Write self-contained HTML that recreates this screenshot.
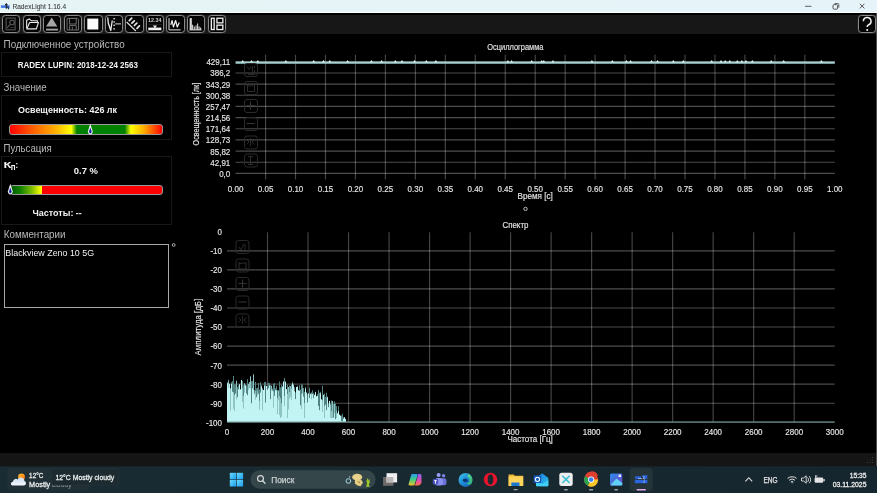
<!DOCTYPE html><html><head><meta charset="utf-8"><style>
*{margin:0;padding:0;box-sizing:border-box}
html,body{width:877px;height:493px;overflow:hidden;background:#000;font-family:"Liberation Sans",sans-serif;position:relative}
.a{position:absolute;white-space:nowrap;line-height:1}
.btn{position:absolute;top:14.5px;width:18.4px;height:18.2px;border:1px solid #8a8a8a;border-radius:3.5px;background:#060606;box-shadow:inset 0 0 0 1px #000, 0 0 0 0.5px #2a2a2a;overflow:hidden}
.box{position:absolute;border:1px solid #181818}
svg{position:absolute;left:0;top:0}
</style></head><body>
<div class="a" style="left:0;top:0;width:877px;height:13px;background:linear-gradient(90deg,#e6f4f5,#e6f3f9)"></div>
<div class="a" style="left:0;top:11.6px;width:877px;height:1.2px;background:#fbffff"></div>
<svg width="12" height="13" style="left:0;top:0;will-change:transform"><rect x="0.9" y="5.3" width="8.7" height="2.6" fill="#3f78e0"/><path d="M6.3 3.2v5.6M5 4.6h2.6M7.5 6.4l1.4 2.8" stroke="#222230" stroke-width="1.1"/></svg>
<svg width="877" height="13" style="left:0;top:0"><path d="M805 6.3h6.5" stroke="#666" stroke-width="1"/><rect x="833" y="4.6" width="4.6" height="4.6" rx="1.2" fill="none" stroke="#555" stroke-width="1"/><path d="M834.6 3.5h3.2a1 1 0 0 1 1 1v3.2" fill="none" stroke="#555" stroke-width="0.9"/><path d="M859.8 3.8l4.6 4.6M864.4 3.8l-4.6 4.6" stroke="#555" stroke-width="1"/></svg>
<div class="a" style="left:0;top:12.8px;width:877px;height:1.8px;background:#000"></div>
<div class="a" style="left:0;top:14.6px;width:877px;height:19.6px;background:#171717"></div>
<div class="btn" style="left:2.00px"></div><svg width="19" height="19" viewBox="0 0 19 19" style="left:2.00px;top:14.5px;will-change:transform"><rect x="4.15" y="3.15" width="9" height="11.6" fill="none" stroke="#404040" stroke-width="1.5"/><circle cx="10" cy="7.5" r="2.3" fill="none" stroke="#585858" stroke-width="1.1"/><path d="M8.2 9.4l-3.2 3.4" stroke="#585858" stroke-width="1.1"/><path d="M7.7 12.4h5.6" stroke="#383838" stroke-width="0.8"/></svg>
<div class="btn" style="left:22.55px"></div><svg width="19" height="19" viewBox="0 0 19 19" style="left:22.55px;top:14.5px;will-change:transform"><path d="M3.65 12.9V5.2l2.5-1.3l2.1 1.8h6.1v1.8" fill="none" stroke="#ececec" stroke-width="1.1" stroke-linejoin="round"/><path d="M3.75 13.9l2.9-6.4h8.8l-2.1 6.4z" fill="none" stroke="#ececec" stroke-width="1.1" stroke-linejoin="round"/></svg>
<div class="btn" style="left:43.10px"></div><svg width="19" height="19" viewBox="0 0 19 19" style="left:43.10px;top:14.5px;will-change:transform"><path d="M8.7 2.6l5.6 9h-11.2z" fill="#a6a6a6"/><rect x="3.1" y="13.7" width="12" height="1.8" fill="#a6a6a6"/></svg>
<div class="btn" style="left:63.65px"></div><svg width="19" height="19" viewBox="0 0 19 19" style="left:63.65px;top:14.5px;will-change:transform"><path d="M3.05 3.4h10.5l1 1v10.6h-11.5z" fill="none" stroke="#6c6c6c" stroke-width="1"/><rect x="5.55" y="3.4" width="6.7" height="5.6" fill="none" stroke="#6c6c6c" stroke-width="1"/><path d="M5.55 15v-4.4h6.7v4.4M8.3 11.8v3" fill="none" stroke="#6c6c6c" stroke-width="1"/></svg>
<div class="btn" style="left:84.20px"></div><svg width="19" height="19" viewBox="0 0 19 19" style="left:84.20px;top:14.5px;will-change:transform"><rect x="3.3" y="3.6" width="11" height="10.9" fill="#fafafa"/></svg>
<div class="btn" style="left:104.75px"></div><svg width="19" height="19" viewBox="0 0 19 19" style="left:104.75px;top:14.5px;will-change:transform"><path d="M2.75 2.5l0.5 5.5l2.5 7.5l1.5-10" fill="none" stroke="#ececec" stroke-width="1.3" stroke-linejoin="round"/><rect x="8.4" y="3" width="1.5" height="1.4" fill="#ddd"/><rect x="8.4" y="6.3" width="1.5" height="1.4" fill="#ddd"/><rect x="8.4" y="9.6" width="1.5" height="1.4" fill="#ddd"/><rect x="8.4" y="13.2" width="1.5" height="1.4" fill="#ddd"/><path d="M10.2 8.9h5.8" stroke="#ddd" stroke-width="1"/></svg>
<div class="btn" style="left:125.30px"></div><svg width="19" height="19" viewBox="0 0 19 19" style="left:125.30px;top:14.5px;will-change:transform"><path d="M1.6 7l9.3 9" stroke="#e4e4e4" stroke-width="1.1"/><path d="M4.3 5.6l2.4-2.4M6.9 8.2l2.4-2.4M9.4 10.5l2.4-2.4M12 13.3l2.4-2.4" stroke="#e8e8e8" stroke-width="1.7" stroke-linecap="round"/></svg>
<div class="btn" style="left:145.85px"></div><svg width="19" height="19" viewBox="0 0 19 19" style="left:145.85px;top:14.5px;will-change:transform"><text x="2.1" y="7.4" font-size="5.2" font-family="Liberation Sans" font-weight="bold" fill="#cfcfcf" textLength="13.3" lengthAdjust="spacingAndGlyphs">12.34</text><path d="M2.5 9.5h13" stroke="#2e2e2e" stroke-width="0.6"/><rect x="2.25" y="12.6" width="13.1" height="2.6" fill="#f2f2f2"/><path d="M6.9 10.6h4.1l-2.05 3.1z" fill="#e6e6e6"/></svg>
<div class="btn" style="left:166.40px"></div><svg width="19" height="19" viewBox="0 0 19 19" style="left:166.40px;top:14.5px;will-change:transform"><path d="M3 3.1v11.8h11.6" fill="none" stroke="#e4e4e4" stroke-width="1"/><path d="M4.8 9.8l1.3-4.3 1.3 6.5 2.2-6.5 1.7 6.5 2-4.5" fill="none" stroke="#f2f2f2" stroke-width="1.2" stroke-linejoin="round"/></svg>
<div class="btn" style="left:186.95px"></div><svg width="19" height="19" viewBox="0 0 19 19" style="left:186.95px;top:14.5px;will-change:transform"><path d="M2.6 14.9h11.9" stroke="#e8e8e8" stroke-width="1"/><rect x="2.65" y="3.1" width="2.2" height="11.8" fill="#d8d8d8"/><path d="M5.6 14.9V9.8M7.3 14.9V11.5M9.05 14.9V10.5M10.6 14.9V8.5M12.1 14.9V11.5M13.6 14.9V12.5" stroke="#cfcfcf" stroke-width="1.1"/></svg>
<div class="btn" style="left:207.50px"></div><svg width="19" height="19" viewBox="0 0 19 19" style="left:207.50px;top:14.5px;will-change:transform"><rect x="3.35" y="3.25" width="2.8" height="11.3" fill="none" stroke="#f2f2f2" stroke-width="1.3"/><rect x="8.95" y="3.25" width="5.9" height="4.6" fill="none" stroke="#f2f2f2" stroke-width="1.3"/><rect x="8.95" y="10.15" width="5.9" height="4.4" fill="none" stroke="#f2f2f2" stroke-width="1.3"/></svg>
<div class="btn" style="left:857.9px;width:18.2px"></div><svg width="19" height="19" viewBox="0 0 19 19" style="left:857.9px;top:14.5px"><path d="M5.4 6.3a3.8 3.8 0 1 1 5.4 3.4c-1.1 0.6-1.6 1.1-1.6 2.1v0.3" fill="none" stroke="#f6f6f6" stroke-width="1.5" stroke-linecap="butt"/><circle cx="9.2" cy="15" r="1" fill="#f6f6f6"/></svg>
<div class="a" style="left:876px;top:13px;width:1px;height:453px;background:#505050"></div>
<div class="box" style="left:1px;top:52px;width:171px;height:25px"></div>
<div class="box" style="left:1px;top:95px;width:171px;height:45px"></div>
<div class="a" style="left:9.3px;top:124.4px;width:153.4px;height:10.3px;border-radius:3px;border:1px solid #9a9a9a;background:linear-gradient(90deg,#ff0000 0%,#ff5a00 14%,#ffb000 30%,#ffff00 40.5%,#008000 44%,#008000 75.5%,#ffff00 79.5%,#ffb000 88%,#ff3000 97%,#ff0000 100%)"></div>
<svg width="9" height="13" style="left:85.6px;top:123.2px"><path d="M4.3 0.8L6.7 8.2Q6.6 11.3 4.3 11.4Q2 11.3 1.9 8.2z" fill="#f4f4f4"/><path d="M4.3 4.6L5.6 8.6Q5.5 10.4 4.3 10.4Q3.1 10.4 3 8.6z" fill="#1020a0"/></svg>
<div class="box" style="left:1px;top:156px;width:171px;height:69px"></div>
<div class="a" style="left:9.8px;top:185px;width:153px;height:10.2px;border-radius:3px;border:1px solid #9a9a9a;background:linear-gradient(90deg,#005a00 0%,#108000 6%,#80c000 14%,#ffff00 19.8%,#ffff00 20.4%,#ff0000 20.7%,#ff0000 100%)"></div>
<svg width="9" height="13" style="left:6.2px;top:183.4px"><path d="M4.3 0.8L6.7 8.2Q6.6 11.3 4.3 11.4Q2 11.3 1.9 8.2z" fill="#f4f4f4"/><path d="M4.3 4.6L5.6 8.6Q5.5 10.4 4.3 10.4Q3.1 10.4 3 8.6z" fill="#1020a0"/></svg>
<div class="a" style="left:3.5px;top:244px;width:165.5px;height:64px;border:1px solid #a8a8a8"></div>
<svg width="6" height="6" style="left:171px;top:243px"><circle cx="2.7" cy="2" r="1.4" fill="none" stroke="#ccc" stroke-width="0.8"/></svg>
<svg width="877" height="493" style="left:0;top:0"><path d="M235.6 61.80H834.8" stroke="#fff" stroke-opacity="0.30" stroke-width="1.15"/><path d="M235.6 72.96H834.8" stroke="#fff" stroke-opacity="0.30" stroke-width="1.15"/><path d="M235.6 84.12H834.8" stroke="#fff" stroke-opacity="0.30" stroke-width="1.15"/><path d="M235.6 95.28H834.8" stroke="#fff" stroke-opacity="0.30" stroke-width="1.15"/><path d="M235.6 106.44H834.8" stroke="#fff" stroke-opacity="0.30" stroke-width="1.15"/><path d="M235.6 117.60H834.8" stroke="#fff" stroke-opacity="0.30" stroke-width="1.15"/><path d="M235.6 128.76H834.8" stroke="#fff" stroke-opacity="0.30" stroke-width="1.15"/><path d="M235.6 139.92H834.8" stroke="#fff" stroke-opacity="0.30" stroke-width="1.15"/><path d="M235.6 151.08H834.8" stroke="#fff" stroke-opacity="0.30" stroke-width="1.15"/><path d="M235.6 162.24H834.8" stroke="#fff" stroke-opacity="0.30" stroke-width="1.15"/><path d="M235.6 173.40H834.8" stroke="#fff" stroke-opacity="0.30" stroke-width="1.15"/><path d="M265.56 54.8V179.5" stroke="#fff" stroke-opacity="0.27" stroke-width="1.15"/><path d="M295.52 54.8V179.5" stroke="#fff" stroke-opacity="0.27" stroke-width="1.15"/><path d="M325.48 54.8V179.5" stroke="#fff" stroke-opacity="0.27" stroke-width="1.15"/><path d="M355.44 54.8V179.5" stroke="#fff" stroke-opacity="0.27" stroke-width="1.15"/><path d="M385.40 54.8V179.5" stroke="#fff" stroke-opacity="0.27" stroke-width="1.15"/><path d="M415.36 54.8V179.5" stroke="#fff" stroke-opacity="0.27" stroke-width="1.15"/><path d="M445.32 54.8V179.5" stroke="#fff" stroke-opacity="0.27" stroke-width="1.15"/><path d="M475.28 54.8V179.5" stroke="#fff" stroke-opacity="0.27" stroke-width="1.15"/><path d="M505.24 54.8V179.5" stroke="#fff" stroke-opacity="0.27" stroke-width="1.15"/><path d="M535.20 54.8V179.5" stroke="#fff" stroke-opacity="0.27" stroke-width="1.15"/><path d="M565.16 54.8V179.5" stroke="#fff" stroke-opacity="0.27" stroke-width="1.15"/><path d="M595.12 54.8V179.5" stroke="#fff" stroke-opacity="0.27" stroke-width="1.15"/><path d="M625.08 54.8V179.5" stroke="#fff" stroke-opacity="0.27" stroke-width="1.15"/><path d="M655.04 54.8V179.5" stroke="#fff" stroke-opacity="0.27" stroke-width="1.15"/><path d="M685.00 54.8V179.5" stroke="#fff" stroke-opacity="0.27" stroke-width="1.15"/><path d="M714.96 54.8V179.5" stroke="#fff" stroke-opacity="0.27" stroke-width="1.15"/><path d="M744.92 54.8V179.5" stroke="#fff" stroke-opacity="0.27" stroke-width="1.15"/><path d="M774.88 54.8V179.5" stroke="#fff" stroke-opacity="0.27" stroke-width="1.15"/><path d="M804.84 54.8V179.5" stroke="#fff" stroke-opacity="0.27" stroke-width="1.15"/></svg>
<svg width="877" height="493" style="left:0;top:0"><circle cx="525.5" cy="208.9" r="1.7" fill="none" stroke="#d0d0d0" stroke-width="0.9"/><path d="M235.6 62.6H834.8" stroke="#a4d0d0" stroke-width="2.4"/><path d="M241.29999999999998 62.2L242.7 59.9L244.1 62.2z" fill="#e4f6f6"/><path d="M250.1 62.2L251.5 59.9L252.9 62.2z" fill="#e4f6f6"/><path d="M256.40000000000003 62.2L257.8 59.9L259.2 62.2z" fill="#e4f6f6"/><path d="M284.5 62.2L285.9 59.9L287.29999999999995 62.2z" fill="#e4f6f6"/><path d="M312.3 62.2L313.7 59.9L315.09999999999997 62.2z" fill="#e4f6f6"/><path d="M322.1 62.2L323.5 59.9L324.9 62.2z" fill="#e4f6f6"/><path d="M328.40000000000003 62.2L329.8 59.9L331.2 62.2z" fill="#e4f6f6"/><path d="M346.20000000000005 62.2L347.6 59.9L349.0 62.2z" fill="#e4f6f6"/><path d="M370.0 62.2L371.4 59.9L372.79999999999995 62.2z" fill="#e4f6f6"/><path d="M380.1 62.2L381.5 59.9L382.9 62.2z" fill="#e4f6f6"/><path d="M393.90000000000003 62.2L395.3 59.9L396.7 62.2z" fill="#e4f6f6"/><path d="M400.6 62.2L402 59.9L403.4 62.2z" fill="#e4f6f6"/><path d="M413.1 62.2L414.5 59.9L415.9 62.2z" fill="#e4f6f6"/><path d="M424.90000000000003 62.2L426.3 59.9L427.7 62.2z" fill="#e4f6f6"/><path d="M434.5 62.2L435.9 59.9L437.29999999999995 62.2z" fill="#e4f6f6"/><path d="M506.5 62.2L507.9 59.9L509.29999999999995 62.2z" fill="#e4f6f6"/><path d="M510.20000000000005 62.2L511.6 59.9L513.0 62.2z" fill="#e4f6f6"/><path d="M530.3000000000001 62.2L531.7 59.9L533.1 62.2z" fill="#e4f6f6"/><path d="M540.3000000000001 62.2L541.7 59.9L543.1 62.2z" fill="#e4f6f6"/><path d="M542.4 62.2L543.8 59.9L545.1999999999999 62.2z" fill="#e4f6f6"/><path d="M551.6 62.2L553 59.9L554.4 62.2z" fill="#e4f6f6"/><path d="M590.5 62.2L591.9 59.9L593.3 62.2z" fill="#e4f6f6"/><path d="M610.9 62.2L612.3 59.9L613.6999999999999 62.2z" fill="#e4f6f6"/><path d="M625.1 62.2L626.5 59.9L627.9 62.2z" fill="#e4f6f6"/><path d="M629.2 62.2L630.6 59.9L632.0 62.2z" fill="#e4f6f6"/><path d="M650.1 62.2L651.5 59.9L652.9 62.2z" fill="#e4f6f6"/><path d="M656.1 62.2L657.5 59.9L658.9 62.2z" fill="#e4f6f6"/><path d="M671.9 62.2L673.3 59.9L674.6999999999999 62.2z" fill="#e4f6f6"/><path d="M681.9 62.2L683.3 59.9L684.6999999999999 62.2z" fill="#e4f6f6"/><path d="M710.3000000000001 62.2L711.7 59.9L713.1 62.2z" fill="#e4f6f6"/><path d="M719.6 62.2L721 59.9L722.4 62.2z" fill="#e4f6f6"/><path d="M723.8000000000001 62.2L725.2 59.9L726.6 62.2z" fill="#e4f6f6"/><path d="M728.4 62.2L729.8 59.9L731.1999999999999 62.2z" fill="#e4f6f6"/><path d="M735.9 62.2L737.3 59.9L738.6999999999999 62.2z" fill="#e4f6f6"/><path d="M740.4 62.2L741.8 59.9L743.1999999999999 62.2z" fill="#e4f6f6"/><path d="M744.6 62.2L746 59.9L747.4 62.2z" fill="#e4f6f6"/><path d="M750.9 62.2L752.3 59.9L753.6999999999999 62.2z" fill="#e4f6f6"/><path d="M769.8000000000001 62.2L771.2 59.9L772.6 62.2z" fill="#e4f6f6"/><path d="M782.3000000000001 62.2L783.7 59.9L785.1 62.2z" fill="#e4f6f6"/><path d="M819.9 62.2L821.3 59.9L822.6999999999999 62.2z" fill="#e4f6f6"/><rect x="244.5" y="63.5" width="13" height="13" rx="2.5" fill="none" stroke="#2a2a2a" stroke-width="1"/><rect x="244.5" y="81.5" width="13" height="13" rx="2.5" fill="none" stroke="#2a2a2a" stroke-width="1"/><rect x="244.5" y="99.5" width="13" height="13" rx="2.5" fill="none" stroke="#2a2a2a" stroke-width="1"/><rect x="244.5" y="117.5" width="13" height="13" rx="2.5" fill="none" stroke="#2a2a2a" stroke-width="1"/><rect x="244.5" y="136.0" width="13" height="13" rx="2.5" fill="none" stroke="#2a2a2a" stroke-width="1"/><rect x="244.5" y="154.0" width="13" height="13" rx="2.5" fill="none" stroke="#2a2a2a" stroke-width="1"/><path d="M247 66.5l2 3 2-3M252.5 66v8M248 74.5h7M254.5 66v2M254.5 70v2" stroke="#333333" fill="none" stroke-width="0.8"/><path d="M247.5 84.5v7h7v-7M247.5 85l2 1.5 2-1.5 2 1.5" stroke="#333333" fill="none" stroke-width="0.9"/><path d="M246.5 105.5h8M250.5 101.5v8" stroke="#333333" stroke-width="1.1"/><path d="M246.5 123.5h8" stroke="#333333" stroke-width="1.1"/><path d="M250.5 138v8M246.5 139.5l2.5 2.5-2.5 2.5M254.5 139.5l-2.5 2.5 2.5 2.5" stroke="#333333" fill="none" stroke-width="0.8"/><path d="M248 156.5h5M248 164.5h5M250.5 156.5v8" stroke="#333333" stroke-width="0.9"/><path d="M227.0 250.80H834.7" stroke="#fff" stroke-opacity="0.30" stroke-width="1.15"/><path d="M227.0 269.85H834.7" stroke="#fff" stroke-opacity="0.30" stroke-width="1.15"/><path d="M227.0 288.90H834.7" stroke="#fff" stroke-opacity="0.30" stroke-width="1.15"/><path d="M227.0 307.95H834.7" stroke="#fff" stroke-opacity="0.30" stroke-width="1.15"/><path d="M227.0 327.00H834.7" stroke="#fff" stroke-opacity="0.30" stroke-width="1.15"/><path d="M227.0 346.05H834.7" stroke="#fff" stroke-opacity="0.30" stroke-width="1.15"/><path d="M227.0 365.10H834.7" stroke="#fff" stroke-opacity="0.30" stroke-width="1.15"/><path d="M227.0 384.15H834.7" stroke="#fff" stroke-opacity="0.30" stroke-width="1.15"/><path d="M227.0 403.20H834.7" stroke="#fff" stroke-opacity="0.30" stroke-width="1.15"/><path d="M227.0 422.25H834.7" stroke="#fff" stroke-opacity="0.30" stroke-width="1.15"/><path d="M267.51 232.3V422" stroke="#fff" stroke-opacity="0.27" stroke-width="1.15"/><path d="M308.03 232.3V422" stroke="#fff" stroke-opacity="0.27" stroke-width="1.15"/><path d="M348.54 232.3V422" stroke="#fff" stroke-opacity="0.27" stroke-width="1.15"/><path d="M389.05 232.3V422" stroke="#fff" stroke-opacity="0.27" stroke-width="1.15"/><path d="M429.57 232.3V422" stroke="#fff" stroke-opacity="0.27" stroke-width="1.15"/><path d="M470.08 232.3V422" stroke="#fff" stroke-opacity="0.27" stroke-width="1.15"/><path d="M510.59 232.3V422" stroke="#fff" stroke-opacity="0.27" stroke-width="1.15"/><path d="M551.11 232.3V422" stroke="#fff" stroke-opacity="0.27" stroke-width="1.15"/><path d="M591.62 232.3V422" stroke="#fff" stroke-opacity="0.27" stroke-width="1.15"/><path d="M632.13 232.3V422" stroke="#fff" stroke-opacity="0.27" stroke-width="1.15"/><path d="M672.65 232.3V422" stroke="#fff" stroke-opacity="0.27" stroke-width="1.15"/><path d="M713.16 232.3V422" stroke="#fff" stroke-opacity="0.27" stroke-width="1.15"/><path d="M753.67 232.3V422" stroke="#fff" stroke-opacity="0.27" stroke-width="1.15"/><path d="M794.19 232.3V422" stroke="#fff" stroke-opacity="0.27" stroke-width="1.15"/><rect x="227" y="382.2" width="1" height="39.8" fill="#528282"/><rect x="227" y="383.3" width="1" height="38.7" fill="#c2f4f4"/><rect x="228" y="379.6" width="1" height="42.4" fill="#528282"/><rect x="228" y="381.8" width="1" height="40.2" fill="#c2f4f4"/><rect x="228" y="381.8" width="1" height="5.9" fill="#8fc4c4"/><rect x="229" y="383.3" width="1" height="38.7" fill="#528282"/><rect x="229" y="384.1" width="1" height="37.9" fill="#c2f4f4"/><rect x="230" y="388.6" width="1" height="33.4" fill="#528282"/><rect x="230" y="388.6" width="1" height="33.4" fill="#c2f4f4"/><rect x="230" y="388.6" width="1" height="22.0" fill="#8fc4c4"/><rect x="231" y="382.1" width="1" height="39.9" fill="#528282"/><rect x="231" y="384.0" width="1" height="38.0" fill="#c2f4f4"/><rect x="232" y="381.0" width="1" height="41.0" fill="#528282"/><rect x="232" y="391.8" width="1" height="30.2" fill="#c2f4f4"/><rect x="233" y="375.9" width="1" height="46.1" fill="#528282"/><rect x="233" y="392.6" width="1" height="29.4" fill="#c2f4f4"/><rect x="233" y="392.6" width="1" height="16.3" fill="#8fc4c4"/><rect x="234" y="383.8" width="1" height="38.2" fill="#528282"/><rect x="234" y="395.0" width="1" height="27.0" fill="#c2f4f4"/><rect x="234" y="395.0" width="1" height="16.1" fill="#8fc4c4"/><rect x="235" y="384.6" width="1" height="37.4" fill="#528282"/><rect x="235" y="393.6" width="1" height="28.4" fill="#c2f4f4"/><rect x="236" y="380.6" width="1" height="41.4" fill="#528282"/><rect x="236" y="381.5" width="1" height="40.5" fill="#c2f4f4"/><rect x="236" y="381.5" width="1" height="18.0" fill="#8fc4c4"/><rect x="237" y="387.1" width="1" height="34.9" fill="#528282"/><rect x="237" y="397.2" width="1" height="24.8" fill="#c2f4f4"/><rect x="238" y="385.4" width="1" height="36.6" fill="#528282"/><rect x="238" y="389.3" width="1" height="32.7" fill="#c2f4f4"/><rect x="239" y="384.3" width="1" height="37.7" fill="#528282"/><rect x="239" y="384.3" width="1" height="37.7" fill="#c2f4f4"/><rect x="240" y="389.5" width="1" height="32.5" fill="#528282"/><rect x="240" y="389.5" width="1" height="32.5" fill="#c2f4f4"/><rect x="241" y="379.8" width="1" height="42.2" fill="#528282"/><rect x="241" y="380.0" width="1" height="42.0" fill="#c2f4f4"/><rect x="242" y="380.9" width="1" height="41.1" fill="#528282"/><rect x="242" y="388.6" width="1" height="33.4" fill="#c2f4f4"/><rect x="242" y="388.6" width="1" height="13.4" fill="#8fc4c4"/><rect x="243" y="385.2" width="1" height="36.8" fill="#528282"/><rect x="243" y="395.9" width="1" height="26.1" fill="#c2f4f4"/><rect x="243" y="395.9" width="1" height="12.7" fill="#8fc4c4"/><rect x="244" y="383.3" width="1" height="38.7" fill="#528282"/><rect x="244" y="383.7" width="1" height="38.3" fill="#c2f4f4"/><rect x="244" y="383.7" width="1" height="8.9" fill="#8fc4c4"/><rect x="245" y="384.6" width="1" height="37.4" fill="#528282"/><rect x="245" y="385.5" width="1" height="36.5" fill="#c2f4f4"/><rect x="246" y="385.5" width="1" height="36.5" fill="#528282"/><rect x="246" y="393.4" width="1" height="28.6" fill="#c2f4f4"/><rect x="247" y="379.1" width="1" height="42.9" fill="#528282"/><rect x="247" y="395.2" width="1" height="26.8" fill="#c2f4f4"/><rect x="248" y="383.8" width="1" height="38.2" fill="#528282"/><rect x="248" y="384.5" width="1" height="37.5" fill="#c2f4f4"/><rect x="248" y="384.5" width="1" height="5.4" fill="#8fc4c4"/><rect x="249" y="382.0" width="1" height="40.0" fill="#528282"/><rect x="249" y="382.0" width="1" height="40.0" fill="#c2f4f4"/><rect x="249" y="382.0" width="1" height="6.1" fill="#8fc4c4"/><rect x="250" y="376.3" width="1" height="45.7" fill="#528282"/><rect x="250" y="376.8" width="1" height="45.2" fill="#c2f4f4"/><rect x="250" y="376.8" width="1" height="11.6" fill="#8fc4c4"/><rect x="251" y="381.3" width="1" height="40.7" fill="#528282"/><rect x="251" y="403.3" width="1" height="18.7" fill="#c2f4f4"/><rect x="252" y="380.9" width="1" height="41.1" fill="#528282"/><rect x="252" y="388.3" width="1" height="33.7" fill="#c2f4f4"/><rect x="253" y="373.9" width="1" height="48.1" fill="#528282"/><rect x="253" y="375.0" width="1" height="47.0" fill="#c2f4f4"/><rect x="253" y="375.0" width="1" height="15.1" fill="#8fc4c4"/><rect x="254" y="389.9" width="1" height="32.1" fill="#528282"/><rect x="254" y="393.7" width="1" height="28.3" fill="#c2f4f4"/><rect x="255" y="381.8" width="1" height="40.2" fill="#528282"/><rect x="255" y="391.0" width="1" height="31.0" fill="#c2f4f4"/><rect x="255" y="391.0" width="1" height="8.7" fill="#8fc4c4"/><rect x="256" y="388.3" width="1" height="33.7" fill="#528282"/><rect x="256" y="397.2" width="1" height="24.8" fill="#c2f4f4"/><rect x="257" y="387.6" width="1" height="34.4" fill="#528282"/><rect x="257" y="390.9" width="1" height="31.1" fill="#c2f4f4"/><rect x="257" y="390.9" width="1" height="4.6" fill="#8fc4c4"/><rect x="258" y="383.0" width="1" height="39.0" fill="#528282"/><rect x="258" y="393.8" width="1" height="28.2" fill="#c2f4f4"/><rect x="259" y="389.6" width="1" height="32.4" fill="#528282"/><rect x="259" y="400.9" width="1" height="21.1" fill="#c2f4f4"/><rect x="259" y="400.9" width="1" height="8.8" fill="#8fc4c4"/><rect x="260" y="382.2" width="1" height="39.8" fill="#528282"/><rect x="260" y="392.6" width="1" height="29.4" fill="#c2f4f4"/><rect x="261" y="385.1" width="1" height="36.9" fill="#528282"/><rect x="261" y="386.4" width="1" height="35.6" fill="#c2f4f4"/><rect x="262" y="388.1" width="1" height="33.9" fill="#528282"/><rect x="262" y="389.7" width="1" height="32.3" fill="#c2f4f4"/><rect x="262" y="389.7" width="1" height="20.8" fill="#8fc4c4"/><rect x="263" y="390.0" width="1" height="32.0" fill="#528282"/><rect x="263" y="390.0" width="1" height="32.0" fill="#c2f4f4"/><rect x="264" y="382.1" width="1" height="39.9" fill="#528282"/><rect x="264" y="385.8" width="1" height="36.2" fill="#c2f4f4"/><rect x="265" y="381.8" width="1" height="40.2" fill="#528282"/><rect x="265" y="402.5" width="1" height="19.5" fill="#c2f4f4"/><rect x="266" y="385.9" width="1" height="36.1" fill="#528282"/><rect x="266" y="385.9" width="1" height="36.1" fill="#c2f4f4"/><rect x="267" y="385.7" width="1" height="36.3" fill="#528282"/><rect x="267" y="389.9" width="1" height="32.1" fill="#c2f4f4"/><rect x="268" y="382.6" width="1" height="39.4" fill="#528282"/><rect x="268" y="388.1" width="1" height="33.9" fill="#c2f4f4"/><rect x="269" y="383.1" width="1" height="38.9" fill="#528282"/><rect x="269" y="385.6" width="1" height="36.4" fill="#c2f4f4"/><rect x="270" y="385.1" width="1" height="36.9" fill="#528282"/><rect x="270" y="399.1" width="1" height="22.9" fill="#c2f4f4"/><rect x="271" y="385.5" width="1" height="36.5" fill="#528282"/><rect x="271" y="386.4" width="1" height="35.6" fill="#c2f4f4"/><rect x="271" y="386.4" width="1" height="4.1" fill="#8fc4c4"/><rect x="272" y="388.5" width="1" height="33.5" fill="#528282"/><rect x="272" y="390.6" width="1" height="31.4" fill="#c2f4f4"/><rect x="273" y="383.8" width="1" height="38.2" fill="#528282"/><rect x="273" y="391.8" width="1" height="30.2" fill="#c2f4f4"/><rect x="273" y="391.8" width="1" height="15.8" fill="#8fc4c4"/><rect x="274" y="383.1" width="1" height="38.9" fill="#528282"/><rect x="274" y="395.8" width="1" height="26.2" fill="#c2f4f4"/><rect x="275" y="388.2" width="1" height="33.8" fill="#528282"/><rect x="275" y="390.2" width="1" height="31.8" fill="#c2f4f4"/><rect x="276" y="385.8" width="1" height="36.2" fill="#528282"/><rect x="276" y="390.4" width="1" height="31.6" fill="#c2f4f4"/><rect x="277" y="390.1" width="1" height="31.9" fill="#528282"/><rect x="277" y="398.4" width="1" height="23.6" fill="#c2f4f4"/><rect x="277" y="398.4" width="1" height="15.7" fill="#8fc4c4"/><rect x="278" y="390.1" width="1" height="31.9" fill="#528282"/><rect x="278" y="391.0" width="1" height="31.0" fill="#c2f4f4"/><rect x="278" y="391.0" width="1" height="9.1" fill="#8fc4c4"/><rect x="279" y="381.5" width="1" height="40.5" fill="#528282"/><rect x="279" y="396.1" width="1" height="25.9" fill="#c2f4f4"/><rect x="279" y="396.1" width="1" height="19.0" fill="#8fc4c4"/><rect x="280" y="387.4" width="1" height="34.6" fill="#528282"/><rect x="280" y="398.7" width="1" height="23.3" fill="#c2f4f4"/><rect x="280" y="398.7" width="1" height="19.3" fill="#8fc4c4"/><rect x="281" y="384.8" width="1" height="37.2" fill="#528282"/><rect x="281" y="403.7" width="1" height="18.3" fill="#c2f4f4"/><rect x="281" y="403.7" width="1" height="13.1" fill="#8fc4c4"/><rect x="282" y="386.0" width="1" height="36.0" fill="#528282"/><rect x="282" y="387.1" width="1" height="34.9" fill="#c2f4f4"/><rect x="283" y="381.0" width="1" height="41.0" fill="#528282"/><rect x="283" y="381.7" width="1" height="40.3" fill="#c2f4f4"/><rect x="284" y="378.0" width="1" height="44.0" fill="#528282"/><rect x="284" y="396.4" width="1" height="25.6" fill="#c2f4f4"/><rect x="284" y="396.4" width="1" height="9.6" fill="#8fc4c4"/><rect x="285" y="381.3" width="1" height="40.7" fill="#528282"/><rect x="285" y="382.1" width="1" height="39.9" fill="#c2f4f4"/><rect x="286" y="389.1" width="1" height="32.9" fill="#528282"/><rect x="286" y="389.1" width="1" height="32.9" fill="#c2f4f4"/><rect x="287" y="384.6" width="1" height="37.4" fill="#528282"/><rect x="287" y="394.4" width="1" height="27.6" fill="#c2f4f4"/><rect x="287" y="394.4" width="1" height="23.6" fill="#8fc4c4"/><rect x="288" y="387.3" width="1" height="34.7" fill="#528282"/><rect x="288" y="387.3" width="1" height="34.7" fill="#c2f4f4"/><rect x="288" y="387.3" width="1" height="22.1" fill="#8fc4c4"/><rect x="289" y="385.5" width="1" height="36.5" fill="#528282"/><rect x="289" y="392.2" width="1" height="29.8" fill="#c2f4f4"/><rect x="289" y="392.2" width="1" height="6.7" fill="#8fc4c4"/><rect x="290" y="386.3" width="1" height="35.7" fill="#528282"/><rect x="290" y="386.4" width="1" height="35.6" fill="#c2f4f4"/><rect x="290" y="386.4" width="1" height="10.6" fill="#8fc4c4"/><rect x="291" y="384.4" width="1" height="37.6" fill="#528282"/><rect x="291" y="388.9" width="1" height="33.1" fill="#c2f4f4"/><rect x="291" y="388.9" width="1" height="11.3" fill="#8fc4c4"/><rect x="292" y="381.8" width="1" height="40.2" fill="#528282"/><rect x="292" y="383.4" width="1" height="38.6" fill="#c2f4f4"/><rect x="293" y="383.8" width="1" height="38.2" fill="#528282"/><rect x="293" y="385.4" width="1" height="36.6" fill="#c2f4f4"/><rect x="294" y="387.2" width="1" height="34.8" fill="#528282"/><rect x="294" y="391.1" width="1" height="30.9" fill="#c2f4f4"/><rect x="295" y="392.3" width="1" height="29.7" fill="#528282"/><rect x="295" y="399.1" width="1" height="22.9" fill="#c2f4f4"/><rect x="296" y="386.8" width="1" height="35.2" fill="#528282"/><rect x="296" y="387.0" width="1" height="35.0" fill="#c2f4f4"/><rect x="297" y="385.7" width="1" height="36.3" fill="#528282"/><rect x="297" y="387.2" width="1" height="34.8" fill="#c2f4f4"/><rect x="298" y="390.1" width="1" height="31.9" fill="#528282"/><rect x="298" y="390.4" width="1" height="31.6" fill="#c2f4f4"/><rect x="299" y="385.3" width="1" height="36.7" fill="#528282"/><rect x="299" y="391.0" width="1" height="31.0" fill="#c2f4f4"/><rect x="300" y="389.5" width="1" height="32.5" fill="#528282"/><rect x="300" y="405.2" width="1" height="16.8" fill="#c2f4f4"/><rect x="301" y="384.3" width="1" height="37.7" fill="#528282"/><rect x="301" y="394.4" width="1" height="27.6" fill="#c2f4f4"/><rect x="301" y="394.4" width="1" height="14.6" fill="#8fc4c4"/><rect x="302" y="384.6" width="1" height="37.4" fill="#528282"/><rect x="302" y="388.8" width="1" height="33.2" fill="#c2f4f4"/><rect x="302" y="388.8" width="1" height="4.5" fill="#8fc4c4"/><rect x="303" y="387.9" width="1" height="34.1" fill="#528282"/><rect x="303" y="396.6" width="1" height="25.4" fill="#c2f4f4"/><rect x="304" y="391.8" width="1" height="30.2" fill="#528282"/><rect x="304" y="403.0" width="1" height="19.0" fill="#c2f4f4"/><rect x="304" y="403.0" width="1" height="15.0" fill="#8fc4c4"/><rect x="305" y="387.0" width="1" height="35.0" fill="#528282"/><rect x="305" y="388.7" width="1" height="33.3" fill="#c2f4f4"/><rect x="306" y="392.1" width="1" height="29.9" fill="#528282"/><rect x="306" y="393.1" width="1" height="28.9" fill="#c2f4f4"/><rect x="307" y="394.4" width="1" height="27.6" fill="#528282"/><rect x="307" y="402.5" width="1" height="19.5" fill="#c2f4f4"/><rect x="308" y="393.2" width="1" height="28.8" fill="#528282"/><rect x="308" y="393.5" width="1" height="28.5" fill="#c2f4f4"/><rect x="309" y="387.7" width="1" height="34.3" fill="#528282"/><rect x="309" y="398.0" width="1" height="24.0" fill="#c2f4f4"/><rect x="310" y="393.8" width="1" height="28.2" fill="#528282"/><rect x="310" y="393.8" width="1" height="28.2" fill="#c2f4f4"/><rect x="311" y="392.4" width="1" height="29.6" fill="#528282"/><rect x="311" y="393.8" width="1" height="28.2" fill="#c2f4f4"/><rect x="311" y="393.8" width="1" height="5.6" fill="#8fc4c4"/><rect x="312" y="390.3" width="1" height="31.7" fill="#528282"/><rect x="312" y="394.1" width="1" height="27.9" fill="#c2f4f4"/><rect x="313" y="392.9" width="1" height="29.1" fill="#528282"/><rect x="313" y="398.1" width="1" height="23.9" fill="#c2f4f4"/><rect x="314" y="394.5" width="1" height="27.5" fill="#528282"/><rect x="314" y="395.0" width="1" height="27.0" fill="#c2f4f4"/><rect x="315" y="391.7" width="1" height="30.3" fill="#528282"/><rect x="315" y="392.2" width="1" height="29.8" fill="#c2f4f4"/><rect x="316" y="395.9" width="1" height="26.1" fill="#528282"/><rect x="316" y="396.6" width="1" height="25.4" fill="#c2f4f4"/><rect x="317" y="394.0" width="1" height="28.0" fill="#528282"/><rect x="317" y="396.0" width="1" height="26.0" fill="#c2f4f4"/><rect x="318" y="389.8" width="1" height="32.2" fill="#528282"/><rect x="318" y="405.9" width="1" height="16.1" fill="#c2f4f4"/><rect x="319" y="392.7" width="1" height="29.3" fill="#528282"/><rect x="319" y="410.2" width="1" height="11.8" fill="#c2f4f4"/><rect x="320" y="391.8" width="1" height="30.2" fill="#528282"/><rect x="320" y="393.4" width="1" height="28.6" fill="#c2f4f4"/><rect x="321" y="399.5" width="1" height="22.5" fill="#528282"/><rect x="321" y="399.5" width="1" height="22.5" fill="#c2f4f4"/><rect x="322" y="385.8" width="1" height="36.2" fill="#528282"/><rect x="322" y="400.7" width="1" height="21.3" fill="#c2f4f4"/><rect x="322" y="400.7" width="1" height="11.2" fill="#8fc4c4"/><rect x="323" y="394.8" width="1" height="27.2" fill="#528282"/><rect x="323" y="394.8" width="1" height="27.2" fill="#c2f4f4"/><rect x="324" y="393.5" width="1" height="28.5" fill="#528282"/><rect x="324" y="406.2" width="1" height="15.8" fill="#c2f4f4"/><rect x="324" y="406.2" width="1" height="11.8" fill="#8fc4c4"/><rect x="325" y="396.8" width="1" height="25.2" fill="#528282"/><rect x="325" y="404.7" width="1" height="17.3" fill="#c2f4f4"/><rect x="326" y="392.7" width="1" height="29.3" fill="#528282"/><rect x="326" y="410.1" width="1" height="11.9" fill="#c2f4f4"/><rect x="327" y="396.6" width="1" height="25.4" fill="#528282"/><rect x="327" y="397.4" width="1" height="24.6" fill="#c2f4f4"/><rect x="328" y="403.6" width="1" height="18.4" fill="#528282"/><rect x="328" y="407.2" width="1" height="14.8" fill="#c2f4f4"/><rect x="329" y="400.9" width="1" height="21.1" fill="#528282"/><rect x="329" y="400.9" width="1" height="21.1" fill="#c2f4f4"/><rect x="330" y="403.5" width="1" height="18.5" fill="#528282"/><rect x="330" y="405.4" width="1" height="16.6" fill="#c2f4f4"/><rect x="330" y="405.4" width="1" height="12.6" fill="#8fc4c4"/><rect x="331" y="400.4" width="1" height="21.6" fill="#528282"/><rect x="331" y="411.5" width="1" height="10.5" fill="#c2f4f4"/><rect x="331" y="411.5" width="1" height="6.5" fill="#8fc4c4"/><rect x="332" y="401.0" width="1" height="21.0" fill="#528282"/><rect x="332" y="401.3" width="1" height="20.7" fill="#c2f4f4"/><rect x="332" y="401.3" width="1" height="16.7" fill="#8fc4c4"/><rect x="333" y="404.0" width="1" height="18.0" fill="#528282"/><rect x="333" y="417.7" width="1" height="4.3" fill="#c2f4f4"/><rect x="334" y="401.4" width="1" height="20.6" fill="#528282"/><rect x="334" y="404.3" width="1" height="17.7" fill="#c2f4f4"/><rect x="334" y="404.3" width="1" height="9.0" fill="#8fc4c4"/><rect x="335" y="403.6" width="1" height="18.4" fill="#528282"/><rect x="335" y="419.1" width="1" height="2.9" fill="#c2f4f4"/><rect x="336" y="406.1" width="1" height="15.9" fill="#528282"/><rect x="336" y="410.7" width="1" height="11.3" fill="#c2f4f4"/><rect x="336" y="410.7" width="1" height="7.3" fill="#8fc4c4"/><rect x="337" y="412.7" width="1" height="9.3" fill="#528282"/><rect x="337" y="413.5" width="1" height="8.5" fill="#c2f4f4"/><rect x="338" y="406.2" width="1" height="15.8" fill="#528282"/><rect x="338" y="411.0" width="1" height="11.0" fill="#c2f4f4"/><rect x="339" y="414.7" width="1" height="7.3" fill="#528282"/><rect x="339" y="414.7" width="1" height="7.3" fill="#c2f4f4"/><rect x="340" y="415.2" width="1" height="6.8" fill="#528282"/><rect x="340" y="416.0" width="1" height="6.0" fill="#c2f4f4"/><rect x="341" y="415.6" width="1" height="6.4" fill="#528282"/><rect x="341" y="421.0" width="1" height="1.0" fill="#c2f4f4"/><rect x="341" y="421.0" width="1" height="-3.0" fill="#8fc4c4"/><rect x="342" y="413.7" width="1" height="8.3" fill="#528282"/><rect x="342" y="421.0" width="1" height="1.0" fill="#c2f4f4"/><rect x="343" y="417.3" width="1" height="4.7" fill="#528282"/><rect x="343" y="418.8" width="1" height="3.2" fill="#c2f4f4"/><rect x="343" y="418.8" width="1" height="-0.8" fill="#8fc4c4"/><rect x="344" y="417.2" width="1" height="4.8" fill="#528282"/><rect x="344" y="417.2" width="1" height="4.8" fill="#c2f4f4"/><rect x="345" y="418.9" width="1" height="3.1" fill="#528282"/><rect x="345" y="418.9" width="1" height="3.1" fill="#c2f4f4"/><rect x="227.0" y="421.5" width="607.7" height="1" fill="#6e9e9e"/><rect x="236.0" y="240.5" width="13" height="13" rx="2.5" fill="none" stroke="#2a2a2a" stroke-width="1"/><rect x="236.0" y="259.0" width="13" height="13" rx="2.5" fill="none" stroke="#2a2a2a" stroke-width="1"/><rect x="236.0" y="277.5" width="13" height="13" rx="2.5" fill="none" stroke="#2a2a2a" stroke-width="1"/><rect x="236.0" y="296.0" width="13" height="13" rx="2.5" fill="none" stroke="#2a2a2a" stroke-width="1"/><rect x="236.0" y="314.0" width="13" height="13" rx="2.5" fill="none" stroke="#2a2a2a" stroke-width="1"/><path d="M239 247l2 3 3-6M245 244v7M240 251.5h7" stroke="#333333" fill="none" stroke-width="0.8"/><path d="M239 262v7h7v-7M239 262.5l2 1.5 2-1.5 2 1.5" stroke="#333333" fill="none" stroke-width="0.9"/><path d="M238.5 283.5h8M242.5 279.5v8" stroke="#333333" stroke-width="1.1"/><path d="M238.5 302h8" stroke="#333333" stroke-width="1.1"/><path d="M242.5 316v8M238.5 317.5l2.5 2.5-2.5 2.5M246.5 317.5l-2.5 2.5 2.5 2.5" stroke="#333333" fill="none" stroke-width="0.8"/></svg>
<div class="a" style="left:0;top:453.3px;width:876px;height:12.7px;background:#151515"></div>
<svg width="877" height="493" style="left:0;top:0"><g fill="#3a3a3a"><rect x="872" y="457" width="1" height="1"/><rect x="869.5" y="459.5" width="1" height="1"/><rect x="872" y="459.5" width="1" height="1"/><rect x="867" y="462" width="1" height="1"/><rect x="869.5" y="462" width="1" height="1"/><rect x="872" y="462" width="1" height="1"/></g></svg>
<svg width="877" height="493" style="left:0;top:0;will-change:transform"><defs><linearGradient id="win" x1="0" y1="0" x2="1" y2="1"><stop offset="0" stop-color="#6ad8fa"/><stop offset="1" stop-color="#1a9ef0"/></linearGradient><linearGradient id="sun" x1="0" y1="0" x2="1" y2="1"><stop offset="0" stop-color="#ffc030"/><stop offset="1" stop-color="#ff6a00"/></linearGradient><linearGradient id="cloud" x1="0" y1="0" x2="0" y2="1"><stop offset="0" stop-color="#c8dcf0"/><stop offset="1" stop-color="#f4f8ff"/></linearGradient><linearGradient id="cop" x1="0" y1="0" x2="1" y2="1"><stop offset="0" stop-color="#30b0ff"/><stop offset="0.35" stop-color="#70e060"/><stop offset="0.6" stop-color="#ffb030"/><stop offset="1" stop-color="#e040c0"/></linearGradient><linearGradient id="edge" x1="0" y1="0" x2="1" y2="1"><stop offset="0" stop-color="#40c8f0"/><stop offset="0.6" stop-color="#1a80d0"/><stop offset="1" stop-color="#1060b0"/></linearGradient><linearGradient id="edge2" x1="0" y1="0" x2="1" y2="1"><stop offset="0" stop-color="#60e0a0"/><stop offset="1" stop-color="#30b070"/></linearGradient><linearGradient id="photo" x1="0" y1="0" x2="1" y2="1"><stop offset="0" stop-color="#2a90f0"/><stop offset="1" stop-color="#7040c0"/></linearGradient><linearGradient id="outl" x1="0" y1="0" x2="1" y2="1"><stop offset="0" stop-color="#1a70d8"/><stop offset="1" stop-color="#30c8f0"/></linearGradient><linearGradient id="tbg" x1="0" y1="0" x2="1" y2="0"><stop offset="0" stop-color="#1a2c33"/><stop offset="1" stop-color="#16262e"/></linearGradient></defs><rect x="0" y="466" width="877" height="27" fill="url(#tbg)"/><rect x="0" y="466" width="877" height="1" fill="#14201f" opacity="0.6"/><rect x="7.3" y="468.1" width="82.4" height="22.5" rx="3.5" fill="#203036"/><circle cx="21.5" cy="477" r="3.4" fill="url(#sun)"/><path d="M12.6 485.5h11.2a2.3 2.3 0 0 0 0.6-4.5a3.6 3.6 0 0 0-6.8-1.6a2.9 2.9 0 0 0-4.6 2.3a1.9 1.9 0 0 0-0.4 3.8z" fill="url(#cloud)"/><text x="51.8" y="486.7" font-size="7.8" font-family="Liberation Sans" fill="#9aa4a6" textLength="20" lengthAdjust="spacingAndGlyphs">cloudy</text><rect x="50.9" y="468.6" width="68" height="16.5" rx="3" fill="#1d2b30" stroke="#28383d" stroke-width="0.6"/><rect x="229.8" y="472.8" width="6.4" height="6.6" fill="url(#win)"/><rect x="236.8" y="472.8" width="6.3" height="6.6" fill="url(#win)"/><rect x="229.8" y="480" width="6.4" height="6.5" fill="url(#win)"/><rect x="236.8" y="480" width="6.3" height="6.5" fill="url(#win)"/><rect x="250.4" y="470.2" width="125.2" height="18.5" rx="9.25" fill="#35464b"/><circle cx="260.5" cy="478.6" r="2.9" fill="none" stroke="#d6dada" stroke-width="1.2"/><path d="M262.6 480.8l2.4 2.5" stroke="#d6dada" stroke-width="1.3" stroke-linecap="round"/><circle cx="348.4" cy="481" r="2.3" fill="none" stroke="#a8d8e0" stroke-width="1"/><circle cx="349.6" cy="476.9" r="0.8" fill="#90b0c0"/><ellipse cx="357.2" cy="477.2" rx="5" ry="3.4" fill="#e6d08a"/><path d="M355 480l6-0.6l2 3.2l-2.4 3.6l-3.2-0.8l-2.6-2z" fill="#e2cc80"/><path d="M358 481.5l2 1.2" stroke="#7a6a30" stroke-width="0.8"/><path d="M366 486.8l1-3-0.6-3 1.6-3 0.4 2.8 1-1.6 0.4 3.2-1 2.6 1.2 2z" fill="#9cc828"/><rect x="383.1" y="477" width="10.3" height="8.8" fill="#6e6a6a"/><rect x="386.5" y="473.2" width="10.6" height="9.2" fill="#f0f0f0"/><rect x="386.5" y="477" width="6.9" height="5.4" fill="#b8b6b6"/><defs><linearGradient id="cop1" x1="0" y1="0" x2="0" y2="1"><stop offset="0" stop-color="#2a9af0"/><stop offset="0.5" stop-color="#40d080"/><stop offset="1" stop-color="#f0c030"/></linearGradient><linearGradient id="cop2" x1="0" y1="0" x2="0" y2="1"><stop offset="0" stop-color="#8a60f0"/><stop offset="0.6" stop-color="#e050b0"/><stop offset="1" stop-color="#ff7040"/></linearGradient></defs><path d="M412.2 474h4.2c0.9 0 1.4 0.6 1.1 1.5l-2.9 9c-0.3 0.6-0.8 0.9-1.5 0.9h-3.4c-0.9 0-1.3-0.6-1.1-1.4l2.4-8.3c0.3-1.1 0.6-1.7 1.2-1.7z" fill="url(#cop1)"/><path d="M417.4 474h2.4c1.1 0 1.7 0.7 1.7 1.7v6.4c0 1.9-1.3 3.3-3.2 3.3h-4.4c0.7 0 1.2-0.4 1.5-1.1l2.6-8.7c0.2-0.8-0.1-1.6-0.6-1.6z" fill="url(#cop2)"/><circle cx="438.6" cy="474.9" r="2" fill="#9a9ef5"/><circle cx="443.6" cy="475.8" r="1.7" fill="#7b83eb"/><rect x="441" y="478.3" width="5.5" height="7" rx="2.2" fill="#6a72d8"/><rect x="435" y="478" width="8" height="7.6" rx="2.5" fill="#8a90f0"/><rect x="432.8" y="479" width="5.4" height="5.4" rx="0.8" fill="#4b53bc"/><path d="M434.2 480.6h2.6M435.5 480.6v3" stroke="#fff" stroke-width="0.9"/><circle cx="465.5" cy="479.9" r="7" fill="url(#edge)"/><path d="M468.5 473.6a7 7 0 0 1 2.5 10.6c-1.4 0.4-3.2 0.3-4.4-0.5c1.6-0.3 3-1.5 3-3.4c0-1.8-1-3.2-2.4-3.8c0.8-0.9 1-2 1.3-2.9z" fill="url(#edge2)"/><ellipse cx="465.2" cy="480.6" rx="2.6" ry="2.2" fill="#0b3a78"/><path d="M462.6 480.6a2.6 2.2 0 0 0 4.2 1.8" fill="none" stroke="#2aa0e8" stroke-width="0.8"/><ellipse cx="490.5" cy="479.5" rx="6.7" ry="6.7" fill="#e8142c"/><ellipse cx="490.5" cy="479.5" rx="2.8" ry="5" fill="#1a2a30"/><path d="M508.6 474.4h5l1.3 1.3h8.3v10.2h-14.6z" fill="#f0b830"/><rect x="508.6" y="476.4" width="14.6" height="9.5" rx="0.5" fill="#fcd45a"/><rect x="511.3" y="482.4" width="8.2" height="3.5" rx="0.6" fill="#1a78d0"/><rect x="513.6" y="489" width="4.1" height="1.3" rx="0.6" fill="#9aa2a4"/><path d="M536 478l6.2-4.7l6.1 4.7v7.5a0.8 0.8 0 0 1-0.8 0.8h-10.7a0.8 0.8 0 0 1-0.8-0.8z" fill="url(#outl)"/><path d="M536 480.2l6.2 3.8l6.1-3.8v5.3a0.8 0.8 0 0 1-0.8 0.8h-10.7a0.8 0.8 0 0 1-0.8-0.8z" fill="#40d0f8"/><rect x="533.7" y="475.6" width="7.5" height="7.5" rx="0.8" fill="#0f5cc0"/><circle cx="537.45" cy="479.35" r="2.1" fill="none" stroke="#fff" stroke-width="1.1"/><rect x="559.3" y="472.8" width="13.4" height="13.2" rx="2.5" fill="#eeeeee"/><path d="M562.3 475.8l3.7 3.6l3.7-3.6M562.3 483l3.7-3.6l3.7 3.6" fill="none" stroke="#38c0d0" stroke-width="1.5"/><rect x="564.1" y="489.1" width="3.7" height="1.3" rx="0.6" fill="#9aa2a4"/><circle cx="591.1" cy="479.6" r="7" fill="#e04030"/><path d="M591.1 479.6L585 476.1a7 7 0 0 0 3 9.9z" fill="#30a050"/><path d="M591.1 479.6L588 486a7 7 0 0 0 10.1-6.4h-0.1z" fill="#f8c828"/><path d="M591.1 479.6L585 476.1a7 7 0 0 1 13-0.6z" fill="#e04030"/><circle cx="591.1" cy="479.6" r="3.1" fill="#fff"/><circle cx="591.1" cy="479.6" r="2.3" fill="#3a80f0"/><rect x="589" y="489.1" width="4.2" height="1.3" rx="0.6" fill="#9aa2a4"/><rect x="610" y="473.4" width="12.3" height="12.2" rx="1.5" fill="url(#photo)"/><path d="M610.5 485l6-6.5l5.8 4.5v1.8a0.8 0.8 0 0 1-0.8 0.8h-10.5z" fill="#60d0f8"/><rect x="618.6" y="474.6" width="2.4" height="2.4" fill="#f0f0ff"/><rect x="614.3" y="489.1" width="3.7" height="1.3" rx="0.6" fill="#9aa2a4"/><rect x="629.7" y="468" width="23.1" height="23.1" rx="3.5" fill="#243439"/><rect x="635" y="476.2" width="6" height="2.6" fill="#2860d8"/><rect x="642" y="475.2" width="5.4" height="3.6" fill="#2860d8"/><rect x="634.8" y="479.8" width="12.6" height="3.4" fill="#2a66e0"/><path d="M638 478.5h6M644 476v7" stroke="#e0e8ff" stroke-width="0.6"/><path d="M641 475l2.5 5.5" stroke="#303030" stroke-width="1"/><rect x="636.5" y="488.9" width="9.5" height="1.6" rx="0.8" fill="#e0a8f0"/><path d="M745.4 481.3l3.4-3.6l3.4 3.6" fill="none" stroke="#e0e0e0" stroke-width="1.1"/><path d="M787.6 478.4a7 7 0 0 1 9 0M789.2 480.2a4.5 4.5 0 0 1 5.8 0M790.8 482a2 2 0 0 1 2.6 0" fill="none" stroke="#e4e4e4" stroke-width="1"/><circle cx="792.1" cy="482.7" r="0.5" fill="#e4e4e4"/><path d="M801.5 478h2l2.7-2.2v7.4l-2.7-2.2h-2z" fill="none" stroke="#e4e4e4" stroke-width="0.9"/><path d="M807.5 477.5a3 3 0 0 1 0 4.5M809.2 476.2a5 5 0 0 1 0 7" fill="none" stroke="#e4e4e4" stroke-width="0.9"/><rect x="814.6" y="477.5" width="8.6" height="5.3" rx="1.2" fill="#e4e4e4"/><rect x="823.4" y="479" width="1.3" height="2.3" fill="#e4e4e4"/><path d="M815.5 475.2v2.5M816.8 475.2v2" stroke="#e4e4e4" stroke-width="0.8"/></svg>
<svg width="877" height="493" style="left:0;top:0;will-change:transform" font-family="Liberation Sans"><text x="12.43" y="9.10" font-size="7.4" fill="#3c3c3c" font-weight="normal" textLength="53.64" lengthAdjust="spacingAndGlyphs" stroke="#3c3c3c" stroke-width="0.1" >RadexLight 1.16.4</text><text x="3.58" y="48.20" font-size="10.3" fill="#b9b9b9" font-weight="normal" textLength="121.13" lengthAdjust="spacingAndGlyphs" >Подключенное устройство</text><text x="17.67" y="68.30" font-size="8.7" fill="#f2f2f2" font-weight="bold" textLength="120.27" lengthAdjust="spacingAndGlyphs" >RADEX LUPIN: 2018-12-24 2563</text><text x="3.58" y="91.40" font-size="10.3" fill="#b9b9b9" font-weight="normal" textLength="43.13" lengthAdjust="spacingAndGlyphs" >Значение</text><text x="18.05" y="113.40" font-size="9" fill="#f2f2f2" font-weight="bold" textLength="99.00" lengthAdjust="spacingAndGlyphs" >Освещенность: 426 лк</text><text x="3.48" y="151.90" font-size="10.3" fill="#b9b9b9" font-weight="normal" textLength="48.33" lengthAdjust="spacingAndGlyphs" >Пульсация</text><text x="3.55" y="167.50" font-size="9" fill="#f2f2f2" font-weight="bold" textLength="7.90" lengthAdjust="spacingAndGlyphs" >К</text><text x="10.78" y="169.70" font-size="8.4" fill="#f2f2f2" font-weight="bold" textLength="4.84" lengthAdjust="spacingAndGlyphs" >п</text><text x="15.38" y="168.00" font-size="8.4" fill="#f2f2f2" font-weight="bold" textLength="2.64" lengthAdjust="spacingAndGlyphs" >:</text><text x="73.83" y="174.00" font-size="9.4" fill="#f2f2f2" font-weight="bold" textLength="24.14" lengthAdjust="spacingAndGlyphs" >0.7 %</text><text x="32.57" y="215.50" font-size="8.6" fill="#f2f2f2" font-weight="bold" textLength="49.26" lengthAdjust="spacingAndGlyphs" >Частоты: --</text><text x="3.78" y="238.40" font-size="10.3" fill="#b9b9b9" font-weight="normal" textLength="61.73" lengthAdjust="spacingAndGlyphs" >Комментарии</text><text x="5.32" y="256.40" font-size="9.6" fill="#f2f2f2" font-weight="normal" textLength="88.76" lengthAdjust="spacingAndGlyphs" >Blackview Zeno 10 5G</text><text x="230.30" y="65.30" font-size="9" fill="#e6e6e6" text-anchor="end" textLength="23.88" lengthAdjust="spacingAndGlyphs" stroke="#e6e6e6" stroke-width="0.15">429,11</text><text x="230.30" y="76.46" font-size="9" fill="#e6e6e6" text-anchor="end" textLength="20.02" lengthAdjust="spacingAndGlyphs" stroke="#e6e6e6" stroke-width="0.15">386,2</text><text x="230.30" y="87.62" font-size="9" fill="#e6e6e6" text-anchor="end" textLength="24.47" lengthAdjust="spacingAndGlyphs" stroke="#e6e6e6" stroke-width="0.15">343,29</text><text x="230.30" y="98.78" font-size="9" fill="#e6e6e6" text-anchor="end" textLength="24.47" lengthAdjust="spacingAndGlyphs" stroke="#e6e6e6" stroke-width="0.15">300,38</text><text x="230.30" y="109.94" font-size="9" fill="#e6e6e6" text-anchor="end" textLength="24.47" lengthAdjust="spacingAndGlyphs" stroke="#e6e6e6" stroke-width="0.15">257,47</text><text x="230.30" y="121.10" font-size="9" fill="#e6e6e6" text-anchor="end" textLength="24.47" lengthAdjust="spacingAndGlyphs" stroke="#e6e6e6" stroke-width="0.15">214,56</text><text x="230.30" y="132.26" font-size="9" fill="#e6e6e6" text-anchor="end" textLength="24.47" lengthAdjust="spacingAndGlyphs" stroke="#e6e6e6" stroke-width="0.15">171,64</text><text x="230.30" y="143.42" font-size="9" fill="#e6e6e6" text-anchor="end" textLength="24.47" lengthAdjust="spacingAndGlyphs" stroke="#e6e6e6" stroke-width="0.15">128,73</text><text x="230.30" y="154.58" font-size="9" fill="#e6e6e6" text-anchor="end" textLength="20.02" lengthAdjust="spacingAndGlyphs" stroke="#e6e6e6" stroke-width="0.15">85,82</text><text x="230.30" y="165.74" font-size="9" fill="#e6e6e6" text-anchor="end" textLength="20.02" lengthAdjust="spacingAndGlyphs" stroke="#e6e6e6" stroke-width="0.15">42,91</text><text x="230.30" y="176.90" font-size="9" fill="#e6e6e6" text-anchor="end" textLength="11.12" lengthAdjust="spacingAndGlyphs" stroke="#e6e6e6" stroke-width="0.15">0,0</text><text x="235.60" y="191.70" font-size="9" fill="#e6e6e6" text-anchor="middle" textLength="15.57" lengthAdjust="spacingAndGlyphs" stroke="#e6e6e6" stroke-width="0.15">0.00</text><text x="265.56" y="191.70" font-size="9" fill="#e6e6e6" text-anchor="middle" textLength="15.57" lengthAdjust="spacingAndGlyphs" stroke="#e6e6e6" stroke-width="0.15">0.05</text><text x="295.52" y="191.70" font-size="9" fill="#e6e6e6" text-anchor="middle" textLength="15.57" lengthAdjust="spacingAndGlyphs" stroke="#e6e6e6" stroke-width="0.15">0.10</text><text x="325.48" y="191.70" font-size="9" fill="#e6e6e6" text-anchor="middle" textLength="15.57" lengthAdjust="spacingAndGlyphs" stroke="#e6e6e6" stroke-width="0.15">0.15</text><text x="355.44" y="191.70" font-size="9" fill="#e6e6e6" text-anchor="middle" textLength="15.57" lengthAdjust="spacingAndGlyphs" stroke="#e6e6e6" stroke-width="0.15">0.20</text><text x="385.40" y="191.70" font-size="9" fill="#e6e6e6" text-anchor="middle" textLength="15.57" lengthAdjust="spacingAndGlyphs" stroke="#e6e6e6" stroke-width="0.15">0.25</text><text x="415.36" y="191.70" font-size="9" fill="#e6e6e6" text-anchor="middle" textLength="15.57" lengthAdjust="spacingAndGlyphs" stroke="#e6e6e6" stroke-width="0.15">0.30</text><text x="445.32" y="191.70" font-size="9" fill="#e6e6e6" text-anchor="middle" textLength="15.57" lengthAdjust="spacingAndGlyphs" stroke="#e6e6e6" stroke-width="0.15">0.35</text><text x="475.28" y="191.70" font-size="9" fill="#e6e6e6" text-anchor="middle" textLength="15.57" lengthAdjust="spacingAndGlyphs" stroke="#e6e6e6" stroke-width="0.15">0.40</text><text x="505.24" y="191.70" font-size="9" fill="#e6e6e6" text-anchor="middle" textLength="15.57" lengthAdjust="spacingAndGlyphs" stroke="#e6e6e6" stroke-width="0.15">0.45</text><text x="535.20" y="191.70" font-size="9" fill="#e6e6e6" text-anchor="middle" textLength="15.57" lengthAdjust="spacingAndGlyphs" stroke="#e6e6e6" stroke-width="0.15">0.50</text><text x="565.16" y="191.70" font-size="9" fill="#e6e6e6" text-anchor="middle" textLength="15.57" lengthAdjust="spacingAndGlyphs" stroke="#e6e6e6" stroke-width="0.15">0.55</text><text x="595.12" y="191.70" font-size="9" fill="#e6e6e6" text-anchor="middle" textLength="15.57" lengthAdjust="spacingAndGlyphs" stroke="#e6e6e6" stroke-width="0.15">0.60</text><text x="625.08" y="191.70" font-size="9" fill="#e6e6e6" text-anchor="middle" textLength="15.57" lengthAdjust="spacingAndGlyphs" stroke="#e6e6e6" stroke-width="0.15">0.65</text><text x="655.04" y="191.70" font-size="9" fill="#e6e6e6" text-anchor="middle" textLength="15.57" lengthAdjust="spacingAndGlyphs" stroke="#e6e6e6" stroke-width="0.15">0.70</text><text x="685.00" y="191.70" font-size="9" fill="#e6e6e6" text-anchor="middle" textLength="15.57" lengthAdjust="spacingAndGlyphs" stroke="#e6e6e6" stroke-width="0.15">0.75</text><text x="714.96" y="191.70" font-size="9" fill="#e6e6e6" text-anchor="middle" textLength="15.57" lengthAdjust="spacingAndGlyphs" stroke="#e6e6e6" stroke-width="0.15">0.80</text><text x="744.92" y="191.70" font-size="9" fill="#e6e6e6" text-anchor="middle" textLength="15.57" lengthAdjust="spacingAndGlyphs" stroke="#e6e6e6" stroke-width="0.15">0.85</text><text x="774.88" y="191.70" font-size="9" fill="#e6e6e6" text-anchor="middle" textLength="15.57" lengthAdjust="spacingAndGlyphs" stroke="#e6e6e6" stroke-width="0.15">0.90</text><text x="804.84" y="191.70" font-size="9" fill="#e6e6e6" text-anchor="middle" textLength="15.57" lengthAdjust="spacingAndGlyphs" stroke="#e6e6e6" stroke-width="0.15">0.95</text><text x="834.80" y="191.70" font-size="9" fill="#e6e6e6" text-anchor="middle" textLength="15.57" lengthAdjust="spacingAndGlyphs" stroke="#e6e6e6" stroke-width="0.15">1.00</text><text x="517.56" y="199.00" font-size="8.8" fill="#e6e6e6" font-weight="normal" textLength="35.28" lengthAdjust="spacingAndGlyphs" stroke="#e6e6e6" stroke-width="0.15" >Время [с]</text><text x="487.35" y="49.80" font-size="9" fill="#e6e6e6" font-weight="normal" textLength="56.10" lengthAdjust="spacingAndGlyphs" stroke="#e6e6e6" stroke-width="0.15" >Осциллограмма</text><text x="502.45" y="227.60" font-size="9" fill="#e6e6e6" font-weight="normal" textLength="26.00" lengthAdjust="spacingAndGlyphs" stroke="#e6e6e6" stroke-width="0.15" >Спектр</text><text x="507.46" y="442.20" font-size="8.8" fill="#e6e6e6" font-weight="normal" textLength="45.38" lengthAdjust="spacingAndGlyphs" stroke="#e6e6e6" stroke-width="0.15" >Частота [Гц]</text><text transform="translate(199.2 145) rotate(-90)" x="-0.4" y="0" font-size="8.8" fill="#e6e6e6" stroke="#e6e6e6" stroke-width="0.15" textLength="62.6" lengthAdjust="spacingAndGlyphs">Освещенность [лк]</text><text transform="translate(201.4 355) rotate(-90)" x="-0.4" y="0" font-size="8.8" fill="#e6e6e6" stroke="#e6e6e6" stroke-width="0.15" textLength="56.6" lengthAdjust="spacingAndGlyphs">Амплитуда [дБ]</text><text x="222.00" y="235.15" font-size="9" fill="#e6e6e6" text-anchor="end" textLength="4.45" lengthAdjust="spacingAndGlyphs" stroke="#e6e6e6" stroke-width="0.15">0</text><text x="222.00" y="254.20" font-size="9" fill="#e6e6e6" text-anchor="end" textLength="11.56" lengthAdjust="spacingAndGlyphs" stroke="#e6e6e6" stroke-width="0.15">-10</text><text x="222.00" y="273.25" font-size="9" fill="#e6e6e6" text-anchor="end" textLength="11.56" lengthAdjust="spacingAndGlyphs" stroke="#e6e6e6" stroke-width="0.15">-20</text><text x="222.00" y="292.30" font-size="9" fill="#e6e6e6" text-anchor="end" textLength="11.56" lengthAdjust="spacingAndGlyphs" stroke="#e6e6e6" stroke-width="0.15">-30</text><text x="222.00" y="311.35" font-size="9" fill="#e6e6e6" text-anchor="end" textLength="11.56" lengthAdjust="spacingAndGlyphs" stroke="#e6e6e6" stroke-width="0.15">-40</text><text x="222.00" y="330.40" font-size="9" fill="#e6e6e6" text-anchor="end" textLength="11.56" lengthAdjust="spacingAndGlyphs" stroke="#e6e6e6" stroke-width="0.15">-50</text><text x="222.00" y="349.45" font-size="9" fill="#e6e6e6" text-anchor="end" textLength="11.56" lengthAdjust="spacingAndGlyphs" stroke="#e6e6e6" stroke-width="0.15">-60</text><text x="222.00" y="368.50" font-size="9" fill="#e6e6e6" text-anchor="end" textLength="11.56" lengthAdjust="spacingAndGlyphs" stroke="#e6e6e6" stroke-width="0.15">-70</text><text x="222.00" y="387.55" font-size="9" fill="#e6e6e6" text-anchor="end" textLength="11.56" lengthAdjust="spacingAndGlyphs" stroke="#e6e6e6" stroke-width="0.15">-80</text><text x="222.00" y="406.60" font-size="9" fill="#e6e6e6" text-anchor="end" textLength="11.56" lengthAdjust="spacingAndGlyphs" stroke="#e6e6e6" stroke-width="0.15">-90</text><text x="222.00" y="425.65" font-size="9" fill="#e6e6e6" text-anchor="end" textLength="16.01" lengthAdjust="spacingAndGlyphs" stroke="#e6e6e6" stroke-width="0.15">-100</text><text x="227.00" y="435.00" font-size="9" fill="#e6e6e6" text-anchor="middle" textLength="4.45" lengthAdjust="spacingAndGlyphs" stroke="#e6e6e6" stroke-width="0.15">0</text><text x="267.51" y="435.00" font-size="9" fill="#e6e6e6" text-anchor="middle" textLength="13.35" lengthAdjust="spacingAndGlyphs" stroke="#e6e6e6" stroke-width="0.15">200</text><text x="308.03" y="435.00" font-size="9" fill="#e6e6e6" text-anchor="middle" textLength="13.35" lengthAdjust="spacingAndGlyphs" stroke="#e6e6e6" stroke-width="0.15">400</text><text x="348.54" y="435.00" font-size="9" fill="#e6e6e6" text-anchor="middle" textLength="13.35" lengthAdjust="spacingAndGlyphs" stroke="#e6e6e6" stroke-width="0.15">600</text><text x="389.05" y="435.00" font-size="9" fill="#e6e6e6" text-anchor="middle" textLength="13.35" lengthAdjust="spacingAndGlyphs" stroke="#e6e6e6" stroke-width="0.15">800</text><text x="429.57" y="435.00" font-size="9" fill="#e6e6e6" text-anchor="middle" textLength="17.80" lengthAdjust="spacingAndGlyphs" stroke="#e6e6e6" stroke-width="0.15">1000</text><text x="470.08" y="435.00" font-size="9" fill="#e6e6e6" text-anchor="middle" textLength="17.80" lengthAdjust="spacingAndGlyphs" stroke="#e6e6e6" stroke-width="0.15">1200</text><text x="510.59" y="435.00" font-size="9" fill="#e6e6e6" text-anchor="middle" textLength="17.80" lengthAdjust="spacingAndGlyphs" stroke="#e6e6e6" stroke-width="0.15">1400</text><text x="551.11" y="435.00" font-size="9" fill="#e6e6e6" text-anchor="middle" textLength="17.80" lengthAdjust="spacingAndGlyphs" stroke="#e6e6e6" stroke-width="0.15">1600</text><text x="591.62" y="435.00" font-size="9" fill="#e6e6e6" text-anchor="middle" textLength="17.80" lengthAdjust="spacingAndGlyphs" stroke="#e6e6e6" stroke-width="0.15">1800</text><text x="632.13" y="435.00" font-size="9" fill="#e6e6e6" text-anchor="middle" textLength="17.80" lengthAdjust="spacingAndGlyphs" stroke="#e6e6e6" stroke-width="0.15">2000</text><text x="672.65" y="435.00" font-size="9" fill="#e6e6e6" text-anchor="middle" textLength="17.80" lengthAdjust="spacingAndGlyphs" stroke="#e6e6e6" stroke-width="0.15">2200</text><text x="713.16" y="435.00" font-size="9" fill="#e6e6e6" text-anchor="middle" textLength="17.80" lengthAdjust="spacingAndGlyphs" stroke="#e6e6e6" stroke-width="0.15">2400</text><text x="753.67" y="435.00" font-size="9" fill="#e6e6e6" text-anchor="middle" textLength="17.80" lengthAdjust="spacingAndGlyphs" stroke="#e6e6e6" stroke-width="0.15">2600</text><text x="794.19" y="435.00" font-size="9" fill="#e6e6e6" text-anchor="middle" textLength="17.80" lengthAdjust="spacingAndGlyphs" stroke="#e6e6e6" stroke-width="0.15">2800</text><text x="834.70" y="435.00" font-size="9" fill="#e6e6e6" text-anchor="middle" textLength="17.80" lengthAdjust="spacingAndGlyphs" stroke="#e6e6e6" stroke-width="0.15">3000</text><text x="29.12" y="477.50" font-size="7.5" fill="#e8ecec" font-weight="normal" textLength="14.15" lengthAdjust="spacingAndGlyphs" stroke="#e8ecec" stroke-width="0.3" >12°C</text><text x="29.11" y="486.70" font-size="7.8" fill="#e8ecec" font-weight="normal" textLength="21.08" lengthAdjust="spacingAndGlyphs" stroke="#e8ecec" stroke-width="0.3" >Mostly</text><text x="55.40" y="479.60" font-size="8" fill="#e8ecec" font-weight="normal" textLength="58.90" lengthAdjust="spacingAndGlyphs" stroke="#e8ecec" stroke-width="0.3" >12°C Mostly cloudy</text><text x="271.27" y="483.20" font-size="8.6" fill="#c8d0d0" font-weight="normal" textLength="23.06" lengthAdjust="spacingAndGlyphs" stroke="#c8d0d0" stroke-width="0.25" >Поиск</text><text x="763.39" y="482.60" font-size="8.2" fill="#e4e4e4" font-weight="normal" textLength="14.22" lengthAdjust="spacingAndGlyphs" stroke="#e4e4e4" stroke-width="0.25" >ENG</text><text x="849.83" y="477.60" font-size="7.4" fill="#ececec" font-weight="normal" textLength="16.64" lengthAdjust="spacingAndGlyphs" stroke="#ececec" stroke-width="0.3" >15:35</text><text x="832.63" y="486.70" font-size="7.4" fill="#ececec" font-weight="normal" textLength="33.84" lengthAdjust="spacingAndGlyphs" stroke="#ececec" stroke-width="0.3" >03.11.2025</text></svg>
</body></html>
